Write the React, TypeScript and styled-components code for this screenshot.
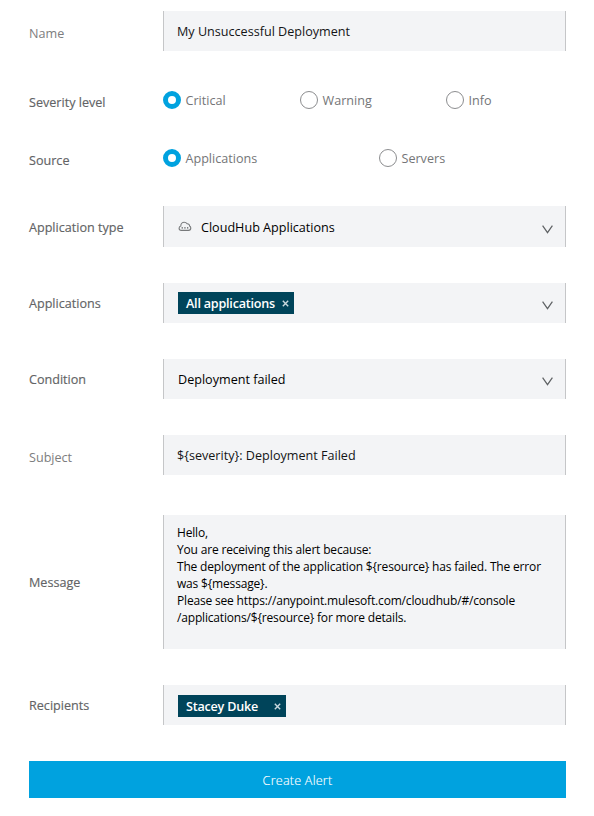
import React from "react";
import styled, { createGlobalStyle } from "styled-components";

const GlobalStyle = createGlobalStyle`
  *, *::before, *::after { box-sizing: border-box; }
  body { margin: 0; background: #fff; font-family: "Open Sans", "Noto Sans", sans-serif; font-size: 12.6px; }
`;

const Form = styled.form`
  width: 594px;
  height: 816px;
  padding: 11px 28px 18px 29px;
  display: flex;
  flex-direction: column;
  overflow: hidden;
`;

const Row = styled.div<{ $height?: number; $gap?: number }>`
  display: grid;
  grid-template-columns: 134px 403px;
  grid-template-rows: 100%;
  flex: none;
  height: ${(p) => p.$height ?? 40}px;
  margin-bottom: ${(p) => p.$gap ?? 36}px;
`;

const Label = styled.label<{ $muted?: boolean; $drop?: number }>`
  align-self: center;
  line-height: 20px;
  padding-top: ${(p) => (p.$drop ?? 0) * 2 + 2}px;
  color: ${(p) => (p.$muted ? "#7d7d7e" : "#626365")};
  -webkit-text-stroke: ${(p) => (p.$muted ? 0 : 0.15)}px currentColor;
  white-space: nowrap;
`;

const Field = styled.div`
  display: flex;
  align-items: center;
  background: #f3f4f6;
  border-left: 1px solid #c5c6c8;
  border-right: 1px solid #c5c6c8;
  padding: 0 12px 0 14px;
`;

const Value = styled.span<{ $soft?: boolean; $indent?: number }>`
  flex: 1;
  line-height: 20px;
  padding-top: 2px;
  margin-left: ${(p) => p.$indent ?? 0}px;
  color: ${(p) => (p.$soft ? "#141516" : "#000")};
  white-space: nowrap;
`;

const Message = styled.p`
  align-self: flex-start;
  margin: 9px 0 0 -1px;
  font-size: 12px;
  line-height: 17px;
  letter-spacing: -0.175px;
  color: #000;
  white-space: pre;
`;

const Chip = styled.span<{ $width: number; $drop?: number }>`
  display: flex;
  align-items: center;
  justify-content: space-between;
  width: ${(p) => p.$width}px;
  height: 22px;
  margin-top: ${(p) => (p.$drop ?? 0) * 2}px;
  padding: 0 5px 0 8px;
  background: #00445a;
  color: #fff;
  font-weight: 600;
  line-height: 20px;
  letter-spacing: -0.22px;
  white-space: nowrap;
`;

const ChipText = styled.span<{ $drop?: number }>`
  padding-top: ${(p) => (p.$drop ? 0 : 2)}px;
`;

const Spacer = styled.span`
  flex: 1;
`;

const Radios = styled.div`
  display: flex;
  align-items: center;
`;

const RadioOption = styled.span<{ $width: number }>`
  display: flex;
  align-items: center;
  width: ${(p) => p.$width}px;
  height: 18px;
  color: #747577;
  line-height: 18px;
  white-space: nowrap;
`;

const RadioText = styled.span`
  padding-top: 2px;
`;

const RadioDot = styled.span<{ $checked?: boolean }>`
  flex: none;
  width: 18px;
  height: 18px;
  margin-right: 4.5px;
  border-radius: 50%;
  border: ${(p) => (p.$checked ? "5px solid #00a2df" : "1px solid #8c8d8f")};
  background: #fff;
`;

const Submit = styled.button`
  flex: none;
  height: 37px;
  padding: 1px 0 0;
  border: 0;
  background: #00a2df;
  color: #fff;
  font: 300 12.6px "Open Sans", sans-serif;
  letter-spacing: 0.22px;
  -webkit-text-stroke: 0.15px #fff;
`;

const ChevronIcon = styled.svg`
  flex: none;
  margin-top: 5px;
`;

const Chevron = () => (
  <ChevronIcon width="11" height="9" viewBox="0 0 11 9">
    <path d="M.6.6 5.5 7.6 10.4.6" fill="none" stroke="#5d6063" strokeWidth="1.2" />
  </ChevronIcon>
);

const Cross = () => (
  <svg width="7" height="7" viewBox="0 0 7 7">
    <path d="M.8.8 6.2 6.2M6.2.8.8 6.2" stroke="#c9d8de" strokeWidth="1.4" />
  </svg>
);

const Cloud = () => (
  <svg width="14" height="11" viewBox="0 0 14 11">
    <path
      d="M3.3 9.4C1.9 9.4 1.1 8.4 1.1 7.2c0-1.1.7-2 1.7-2.2C2.8 2.8 4.2 1.3 6.2 1.3c1.3 0 2.3.6 2.9 1.5 1.6-.1 2.5.9 2.5 2.2.8.4 1.2 1.2 1.2 2.1 0 1.3-.9 2.3-2.3 2.3z"
      fill="none"
      stroke="#77797b"
      strokeWidth="1.1"
    />
    <path d="M3.6 6.9h1.3M6.3 6.900h1.300M9 6.900h1.300" stroke="#55575a" strokeWidth="1.300" />
  </svg>
);

const Radio = ({ label, width, checked }: { label: string; width: number; checked?: boolean }) => (
  <RadioOption $width={width}>
    <RadioDot $checked={checked} />
    <RadioText>{label}</RadioText>
  </RadioOption>
);

export default function App() {
  return (
    <>
      <GlobalStyle />
      <Form>
        <Row $gap={40}>
          <Label $muted $drop={2}>Name</Label>
          <Field><Value $soft $indent={-1}>My Unsuccessful Deployment</Value></Field>
        </Row>
        <Row $height={18} $gap={40}>
          <Label $drop={2}>Severity level</Label>
          <Radios>
            <Radio label="Critical" width={137} checked />
            <Radio label="Warning" width={146} />
            <Radio label="Info" width={80} />
          </Radios>
        </Row>
        <Row $height={18} $gap={39}>
          <Label $drop={2}>Source</Label>
          <Radios>
            <Radio label="Applications" width={216} checked />
            <Radio label="Servers" width={100} />
          </Radios>
        </Row>
        <Row $height={41}>
          <Label>Application type</Label>
          <Field>
            <Cloud />
            <Value $indent={9}>CloudHub Applications</Value>
            <Chevron />
          </Field>
        </Row>
        <Row>
          <Label>Applications</Label>
          <Field>
            <Chip $width={116}><ChipText>All applications</ChipText><Cross /></Chip>
            <Spacer />
            <Chevron />
          </Field>
        </Row>
        <Row>
          <Label>Condition</Label>
          <Field><Value>Deployment failed</Value><Chevron /></Field>
        </Row>
        <Row $gap={40}>
          <Label $muted $drop={2}>Subject</Label>
          <Field><Value $soft $indent={-1}>{"${severity}: Deployment Failed"}</Value></Field>
        </Row>
        <Row $height={134}>
          <Label>Message</Label>
          <Field>
            <Message>
              {[
                "Hello,",
                "You are receiving this alert because:",
                "The deployment of the application ${resource} has failed. The error",
                "was ${message}.",
                "Please see https://anypoint.mulesoft.com/cloudhub/#/console",
                "/applications/${resource} for more details.",
              ].join("\n")}
            </Message>
          </Field>
        </Row>
        <Row>
          <Label>Recipients</Label>
          <Field><Chip $width={108} $drop={1}><ChipText>Stacey Duke</ChipText><Cross /></Chip></Field>
        </Row>
        <Submit type="button">Create Alert</Submit>
      </Form>
    </>
  );
}
